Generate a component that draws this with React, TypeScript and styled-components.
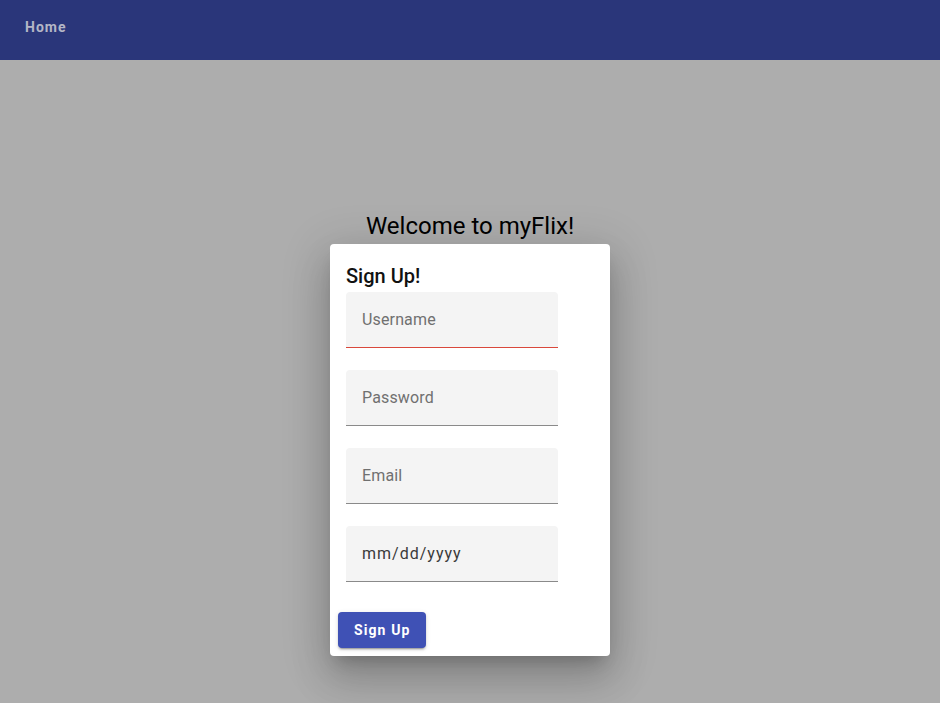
import React from "react";
import styled, { createGlobalStyle } from "styled-components";

const Global = createGlobalStyle`
  html, body { margin: 0; padding: 0; }
  body { background: #adadad; font-family: Roboto, "Liberation Sans", sans-serif; }
`;

const Page = styled.div`
  min-height: 703px;
  display: flex;
  flex-direction: column;
`;

const NavBar = styled.header`
  height: 60px;
  background: #2a367a;
  display: flex;
  align-items: center;
  padding: 0 25px;
  box-sizing: border-box;
`;

const NavLink = styled.a`
  color: #b4b6c6;
  font-size: 14px;
  font-weight: 700;
  letter-spacing: 1px;
  text-decoration: none;
  margin-top: -6px;
`;

const Main = styled.main`
  display: flex;
  flex-direction: column;
  align-items: center;
  padding-top: 149px;
`;

const Title = styled.h1`
  margin: 0 0 1px;
  font-size: 24px;
  font-weight: 400;
  color: #000;
  line-height: 34px;
`;

const Card = styled.div`
  width: 280px;
  background: #fff;
  border-radius: 4px;
  box-shadow: 0 11px 15px -7px rgba(0,0,0,0.2), 0 24px 38px 3px rgba(0,0,0,0.14), 0 9px 46px 8px rgba(0,0,0,0.12);
  padding: 20px 16px 8px;
  box-sizing: border-box;
  display: flex;
  flex-direction: column;
`;

const CardTitle = styled.h2`
  margin: 0 0 4px;
  font-size: 20px;
  font-weight: 500;
  line-height: 24px;
  color: #111;
`;

const Fields = styled.div`
  display: flex;
  flex-direction: column;
  gap: 22px;
`;

const Field = styled.div<{ $error?: boolean; $date?: boolean }>`
  width: 212px;
  height: 56px;
  background: #f4f4f4;
  border-radius: 4px 4px 0 0;
  border-bottom: 1px solid ${p => (p.$error ? "#d9483b" : "#8a8a8a")};
  box-sizing: border-box;
  display: flex;
  align-items: center;
  padding: 0 16px;
  font-size: 16px;
  color: ${p => (p.$date ? "#3a3a3a" : "#707070")};
  letter-spacing: ${p => (p.$date ? "1px" : "0.15px")};
`;

const Button = styled.button`
  align-self: flex-start;
  margin: 30px 0 0 -8px;
  height: 36px;
  padding: 0 16px;
  background: #3f51b5;
  color: #fff;
  border: none;
  border-radius: 4px;
  font-family: Roboto, "Liberation Sans", sans-serif;
  font-size: 14px;
  font-weight: 700;
  letter-spacing: 1.1px;
  box-shadow: 0 3px 1px -2px rgba(0,0,0,0.2), 0 2px 2px 0 rgba(0,0,0,0.14), 0 1px 5px 0 rgba(0,0,0,0.12);
`;

export default function App() {
  return (
    <>
      <Global />
      <Page>
        <NavBar>
          <NavLink href="#">Home</NavLink>
        </NavBar>
        <Main>
          <Title>Welcome to myFlix!</Title>
          <Card>
            <CardTitle>Sign Up!</CardTitle>
            <Fields>
              <Field $error>Username</Field>
              <Field>Password</Field>
              <Field>Email</Field>
              <Field $date>mm/dd/yyyy</Field>
            </Fields>
            <Button>Sign Up</Button>
          </Card>
        </Main>
      </Page>
    </>
  );
}
